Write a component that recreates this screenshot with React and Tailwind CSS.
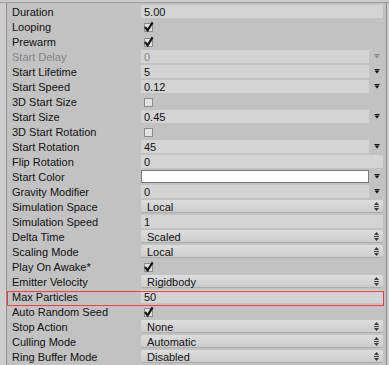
import React from "react";

const FONT = { fontFamily: '"Liberation Sans", Arial, sans-serif' };

function MinMaxArrow({ disabled }) {
  const c = disabled ? "#8a8a8a" : "#111111";
  return (
    <div className="w-[14px] h-[13px] flex items-center justify-center pl-[2px]">
      <svg width="6" height="5" viewBox="0 0 6 5">
        <rect x="0.5" y="0" width="5" height="1" fill={c} />
        <path d="M0.5 1.5 H5.5 L3 4.5 Z" fill={c} />
      </svg>
    </div>
  );
}

function PopupArrow() {
  return (
    <svg width="5" height="9" viewBox="0 0 5 9" className="absolute right-[4px] top-[2px]">
      <path d="M2.5 0 L5 3 H0 Z" fill="#3a3a3a" />
      <rect x="0" y="4" width="5" height="1" fill="#3a3a3a" />
      <path d="M0 6 H5 L2.5 9 Z" fill="#3a3a3a" />
    </svg>
  );
}

function Field({ value, disabled, full }) {
  return (
    <div
      className={`${full ? "w-[242px]" : "w-[228px]"} h-[13px] bg-[#d4d4d4] pl-[3px] leading-[13px] pt-[1px] ${
        disabled ? "text-[#8a8a8a]" : "text-[#111111]"
      }`}
    >
      {value}
    </div>
  );
}

function Popup({ value }) {
  return (
    <div className="relative w-[242px] h-[13px] rounded-[2px] bg-gradient-to-b from-[#dddddd] to-[#cccccc] border-b border-[#acacac] pl-[6px] leading-[13px] pt-[1px] text-[#111111]">
      {value}
      <PopupArrow />
    </div>
  );
}

function Check({ checked }) {
  return (
    <svg width="12" height="13" viewBox="0 0 12 13" className="ml-[1px]">
      <rect x="2.5" y="3.5" width="8" height="8" fill="#e2e2e2" stroke="#8c8c8c" strokeWidth="1" />
      {checked && (
        <path d="M3 7 L5.6 10.4 L10.6 2.4" fill="none" stroke="#151515" strokeWidth="2.2" strokeLinejoin="miter" />
      )}
    </svg>
  );
}

function Row({ label, disabled, children, highlight }) {
  return (
    <div className="relative flex h-[15px] shrink-0">
      <div
        className={`w-[134px] pl-[5px] leading-[15px] whitespace-nowrap ${
          disabled ? "text-[#858585]" : "text-[#111111]"
        }`}
      >
        {label}
      </div>
      <div className="w-[242px] h-[13px] flex">{children}</div>
      {highlight && (
        <div className="absolute left-0 top-[1px] w-[377px] h-[15px] pointer-events-none flex flex-col justify-between">
          <div className="h-[1px] w-full bg-[#ff3c3c]" />
          <div className="h-[1px] w-full bg-[#ff3c3c]" />
          <div className="absolute left-0 top-0 w-[1px] h-full bg-[#ff3c3c]" />
          <div className="absolute right-0 top-0 w-[1px] h-full bg-[#ff3c3c]" />
        </div>
      )}
    </div>
  );
}

export default function App() {
  return (
    <div className="w-[389px] h-[365px] overflow-hidden bg-[#c2c2c2] flex flex-col text-[11px]" style={FONT}>
      <div className="h-[3px] shrink-0 bg-[#cbcbcb] border-b border-[#9c9c9c]" />
      <div className="flex flex-1">
        <div className="w-[7px] shrink-0 bg-[#cecece] border-r border-[#8e8e8e]" />
        <div className="w-[379px] pt-[2px] flex flex-col">
          <Row label="Duration"><Field value="5.00" full /></Row>
          <Row label="Looping"><Check checked /></Row>
          <Row label="Prewarm"><Check checked /></Row>
          <Row label="Start Delay" disabled><Field value="0" disabled /><MinMaxArrow disabled /></Row>
          <Row label="Start Lifetime"><Field value="5" /><MinMaxArrow /></Row>
          <Row label="Start Speed"><Field value="0.12" /><MinMaxArrow /></Row>
          <Row label="3D Start Size"><Check /></Row>
          <Row label="Start Size"><Field value="0.45" /><MinMaxArrow /></Row>
          <Row label="3D Start Rotation"><Check /></Row>
          <Row label="Start Rotation"><Field value="45" /><MinMaxArrow /></Row>
          <Row label="Flip Rotation"><Field value="0" full /></Row>
          <Row label="Start Color">
            <div className="w-[228px] h-[13px] bg-white border border-[#7a7a7a]" />
            <MinMaxArrow />
          </Row>
          <Row label="Gravity Modifier"><Field value="0" /><MinMaxArrow /></Row>
          <Row label="Simulation Space"><Popup value="Local" /></Row>
          <Row label="Simulation Speed"><Field value="1" full /></Row>
          <Row label="Delta Time"><Popup value="Scaled" /></Row>
          <Row label="Scaling Mode"><Popup value="Local" /></Row>
          <Row label="Play On Awake*"><Check checked /></Row>
          <Row label="Emitter Velocity"><Popup value="Rigidbody" /></Row>
          <Row label="Max Particles" highlight><Field value="50" full /></Row>
          <Row label="Auto Random Seed"><Check checked /></Row>
          <Row label="Stop Action"><Popup value="None" /></Row>
          <Row label="Culling Mode"><Popup value="Automatic" /></Row>
          <Row label="Ring Buffer Mode"><Popup value="Disabled" /></Row>
        </div>
        <div className="w-[3px] shrink-0 bg-[#cecece] border-l border-[#8e8e8e]" />
      </div>
    </div>
  );
}
